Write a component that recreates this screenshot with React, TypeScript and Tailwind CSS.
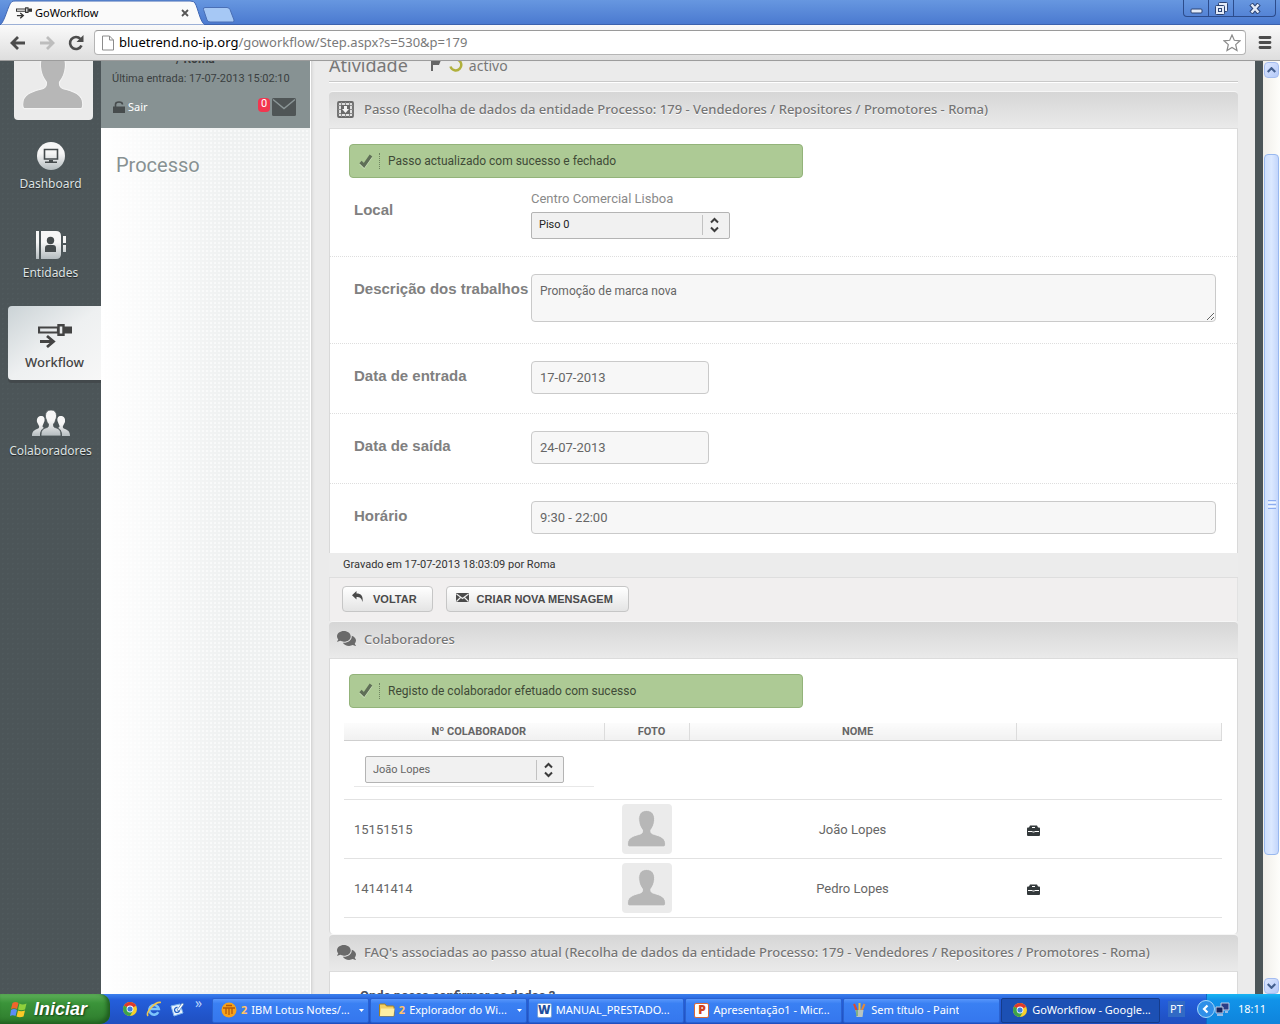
import type { ReactNode } from 'react'
import { FaComments } from 'react-icons/fa'

const STEP_TITLE = 'Recolha de dados da entidade Processo: 179 - Vendedores / Repositores / Promotores - Roma'

interface Colaborador {
  numero: string
  nome: string
}

const colaboradores: Colaborador[] = [
  { numero: '15151515', nome: 'João Lopes' },
  { numero: '14141414', nome: 'Pedro Lopes' },
]

/* ---------- icons ---------- */

function WorkflowIcon({ className }: { className?: string }) {
  return (
    <svg viewBox="0 0 34 24" className={className} fill="none" stroke="currentColor">
      <path d="M1 3.5h19v5H1z" strokeWidth="2.200" />
      <path d="M20.500 1.200h5v9.600h-5z" strokeWidth="2.400" />
      <path d="M26 2.500h8v7h-8z" fill="currentColor" stroke="none" />
      <path d="M2 17.500h13M9 12l6.500 5.500L9 23" strokeWidth="2.800" />
    </svg>
  )
}

function PersonIcon({ className }: { className?: string }) {
  return (
    <svg viewBox="0 0 50 50" className={className}>
      <path
        d="M24.500 6.500C30.500 6.500 33 11 32.500 16.500c-.3 4-1.700 7-3.700 9.500-.2 2 0 3.200 2 4C35 31.500 43.500 32.500 43.500 40q0 2.800-1.500 2.800H7Q5.500 42.800 5.500 40c0-7.500 8.500-8.500 13-10 2-.8 2.200-2 2-4-2-2.500-3.400-5.500-3.700-9.500C16.300 11 18.500 6.500 24.500 6.500z"
        fill="#b7b7b7"
        stroke="#f4f4f4"
        strokeWidth=".7"
      />
    </svg>
  )
}

function DashboardIcon() {
  return (
    <svg width="28" height="28" viewBox="0 0 28 28">
      <circle cx="14" cy="14" r="14" fill="url(#nav)" />
      <path d="M7.500 7.500h13v9.500h-13z" fill="none" stroke="#454b4d" strokeWidth="1.600" />
      <path d="M12 18h4v1.500h4V21H8v-1.500h4z" fill="#454b4d" />
    </svg>
  )
}

function EntidadesIcon() {
  return (
    <svg width="30" height="28" viewBox="0 0 30 28">
      <path d="M0 0h3v28H0zM5 0h15q5 0 5 5v18q0 5-5 5H5zM27 5h3v7h-3zM27 14h3v7h-3z" fill="url(#nav)" />
      <circle cx="14.500" cy="9.500" r="3.700" fill="#454b4d" />
      <path d="M9 21v-4q0-3 3-3h5q3 0 3 3v4z" fill="#454b4d" />
    </svg>
  )
}

function ColaboradoresIcon() {
  return (
    <svg width="38" height="26" viewBox="0 0 38 26" fill="url(#nav)">
      <path d="M9 6c3 0 4 2 3.500 5l-2 5c0 1 .5 1.500 1.500 2-3 1.500-4 3.500-4 8H0c0-4 1.500-5.500 5-7 2-.8 2.500-1.500 2-3L5 12c-.5-3.500 1-6 4-6zM29 6c-3 0-4 2-3.500 5l2 5c0 1-.5 1.500-1.500 2 3 1.500 4 3.500 4 8h8c0-4-1.500-5.500-5-7-2-.8-2.500-1.500-2-3l2-4c.5-3.500-1-6-4-6z" />
      <path
        d="M19 0c3.500 0 5.500 2 5.500 5.500 0 2-.2 3-1 4.500-.4 2-1 3-2 4 0 3 0 3 3 4 3 1.200 4.500 2.500 4.500 8H9c0-5.500 1.500-6.800 4.500-8 3-1 3-1 3-4-1-1-1.600-2-2-4-.8-1.500-1-2.500-1-4.500C13.500 2 15.500 0 19 0z"
        stroke="#4c5558"
        strokeWidth=".8"
      />
    </svg>
  )
}

function GridDownIcon() {
  return (
    <svg width="17" height="17" viewBox="0 0 17 17" className="shrink-0">
      <rect x="1" y="1" width="15" height="15" rx="1" fill="none" stroke="#6a6a6a" strokeWidth="1.800" />
      <path d="M1 4.500h15M1 8.500h3M13 8.500h3M1 12.500h15M4.500 1v15M12.500 1v15M8.500 1v3M8.500 13v3" stroke="#8a8a8a" />
      <path d="M4 4h9v9H4z" fill="#6a6a6a" />
      <path d="M7 5h3v3h2l-3.500 4L5 8h2z" fill="#f4f4f4" />
    </svg>
  )
}

function CheckIcon() {
  return (
    <svg width="14" height="15" viewBox="0 0 14 15" className="shrink-0">
      <path d="M1.500 9L5 12.500 12 2.500" fill="none" stroke="#d3e5c4" strokeWidth="3.200" />
      <path d="M1.500 8L5 11.500 12 1.500" fill="none" stroke="#5f6f57" strokeWidth="3.200" />
    </svg>
  )
}

function BriefcaseIcon() {
  return (
    <svg width="13" height="11" viewBox="0 0 13 11">
      <path d="M3 .5h7l1 2h1.500l.5 1V10q0 1-1 1H1q-1 0-1-1V3.500l.5-1H2z" fill="#33393b" />
      <path d="M5 2.500h3M1 6.500h4.500M7.500 6.500H12" stroke="#fff" />
      <path d="M5.500 7h2" stroke="#fff" />
    </svg>
  )
}

function ChromeIcon({ className }: { className?: string }) {
  return (
    <svg viewBox="0 0 16 16" className={className}>
      <circle cx="8" cy="8" r="7" fill="#f7cf2c" />
      <path d="M8 8L1.940 4.500A7 7 0 0 1 14.060 4.500z" fill="#dd3a2c" />
      <path d="M14.500 5H8l1 1z" fill="#dd3a2c" />
      <path d="M1.940 4.500A7 7 0 0 0 8 15l3-5.500L8 8z" fill="#3da44a" />
      <circle cx="8" cy="8" r="3.400" fill="#fff" />
      <circle cx="8" cy="8" r="2.600" fill="#3c7ee0" />
    </svg>
  )
}

/* ---------- browser chrome ---------- */

function TitleBar() {
  return (
    <header className="flex h-[25px] shrink-0 items-start justify-between border-b border-[#3c62ad] bg-linear-to-b from-[#6797e0] to-[#4b7ad0]">
      <div className="flex">
        <div className="relative flex h-[25px] w-[205px] items-center pt-px pr-4 pl-4">
          <svg className="absolute inset-0 h-full w-full" viewBox="0 0 205 25" preserveAspectRatio="none">
            <path d="M0 25C5 22 8 4 12 1.500Q13 1 15 1H190Q194 1 195 3C198 8 200 22 205 25z" fill="#fafafa" stroke="#3f66b3" />
          </svg>
          <WorkflowIcon className="relative h-3 w-4 text-[#333]" />
          <span className="relative ml-[3px] flex-1 text-[11px] text-black">GoWorkflow</span>
          <button aria-label="Fechar separador" className="relative">
            <svg width="8" height="8" viewBox="0 0 8 8" stroke="#555" strokeWidth="1.800">
              <path d="M1 1l6 6M7 1L1 7" />
            </svg>
          </button>
        </div>
        <button aria-label="Novo separador" className="-ml-0.5 pt-[5px]">
          <svg width="32" height="16" viewBox="0 0 32 16">
            <path d="M2 .5H24q2 0 3 2L31 13q.5 2-1.500 2H7q-2 0-3-2L.5 2.500q-.5-2 1.500-2z" fill="#a6c8f5" stroke="#4a6fb5" />
          </svg>
        </button>
      </div>
      <div className="mr-1 flex h-[17px] rounded-b border border-t-0 border-[#2c4c8c] text-[#dfe9fa]">
        <button aria-label="Minimizar" className="flex w-[25px] items-center justify-center border-r border-[#2c4c8c]">
          <svg width="13" height="13" viewBox="0 0 13 13">
            <rect x="1" y="7" width="11" height="4" rx="1" fill="#e3ebf8" stroke="#2c4474" />
          </svg>
        </button>
        <button aria-label="Restaurar" className="flex w-[25px] items-center justify-center border-r border-[#2c4c8c]">
          <svg width="13" height="13" viewBox="0 0 13 13" fill="#e3ebf8" stroke="#2c4474">
            <rect x="3.500" y=".5" width="9" height="9" rx="1" />
            <rect x=".5" y="3.500" width="9" height="9" rx="1" />
            <rect x="3.500" y="6.500" width="3" height="3" />
          </svg>
        </button>
        <button aria-label="Fechar" className="flex w-[41px] items-center justify-center">
          <svg width="12" height="11" viewBox="0 0 12 11">
            <path d="M2 1l8 9M10 1L2 10" stroke="#2c4474" strokeWidth="4.500" />
            <path d="M2.500 1.500l7 8M9.500 1.500l-7 8" stroke="#e3ebf8" strokeWidth="2.500" />
          </svg>
        </button>
      </div>
    </header>
  )
}

function Toolbar() {
  return (
    <div className="flex h-9 shrink-0 items-center border-b border-[#9c9c9c] bg-linear-to-b from-[#fafafa] to-[#dedede] pr-2 pl-2.5">
      <button aria-label="Anterior" className="w-[29px]">
        <svg width="16" height="14" viewBox="0 0 16 14" fill="none" stroke="#4c4c4c" strokeWidth="2.800">
          <path d="M15 7H2M8 1L2 7l6 6" />
        </svg>
      </button>
      <button aria-label="Seguinte" className="w-[29px]">
        <svg width="16" height="14" viewBox="0 0 16 14" fill="none" stroke="#bdbdbd" strokeWidth="2.800">
          <path d="M1 7h13M8 1l6 6-6 6" />
        </svg>
      </button>
      <button aria-label="Recarregar" className="w-[26px]">
        <svg width="16" height="16" viewBox="0 0 16 16">
          <path d="M12.500 4A6 6 0 1 0 13.500 10.500" fill="none" stroke="#4c4c4c" strokeWidth="2.600" />
          <path d="M15.500 0v7H8.500z" fill="#4c4c4c" />
        </svg>
      </button>
      <div className="flex h-[25px] flex-1 items-center rounded-sm border border-[#b5b5b5] border-t-[#9a9a9a] bg-white pr-1 pl-[7px]">
        <svg width="12" height="16" viewBox="0 0 12 16" className="mr-[5px] shrink-0">
          <path d="M.5 1h7l4 4v10H.5zM7.500 1v4h4" fill="#fff" stroke="#8c8c8c" />
        </svg>
        <div role="textbox" aria-label="Endereço" className="flex-1 text-[13px] text-[#7a7a7a]">
          <span className="text-black">bluetrend.no-ip.org</span>/goworkflow/Step.aspx?s=530&amp;p=179
        </div>
        <button aria-label="Adicionar aos favoritos">
          <svg width="18" height="18" viewBox="0 0 18 18">
            <path
              d="M9 1l2.300 5.300 5.700.5-4.300 3.800 1.300 5.900L9 13.500l-5 3 1.300-5.900L1 6.800l5.700-.5z"
              fill="#fff"
              stroke="#8a8a8a"
              strokeWidth="1.200"
            />
          </svg>
        </button>
      </div>
      <button aria-label="Menu" className="ml-3">
        <svg width="14" height="13" viewBox="0 0 14 13" stroke="#4d4d4d" strokeWidth="2.800" strokeLinecap="round">
          <path d="M2 1.500h10M2 6.500h10M2 11.500h10" />
        </svg>
      </button>
    </div>
  )
}

function ScrollButton({ down }: { down?: boolean }) {
  return (
    <button
      aria-label={down ? 'Descer' : 'Subir'}
      className="mx-px flex h-4 shrink-0 items-center justify-center rounded-sm border border-[#a5bdf0] bg-linear-to-br from-[#dde7fe] to-[#b4c9f8]"
    >
      <svg width="9" height="6" viewBox="0 0 9 6" fill="none" stroke="#44608f" strokeWidth="2.200">
        <path d={down ? 'M.7 1l3.800 3.800L8.300 1' : 'M.7 5l3.800-3.800L8.300 5'} />
      </svg>
    </button>
  )
}

function ScrollBar() {
  return (
    <div className="flex w-[17px] shrink-0 flex-col bg-linear-to-r from-[#f1efea] to-[#fefefb] pt-px">
      <ScrollButton />
      <div className="grow-[77]" />
      <div className="mx-px flex grow-[700] flex-col items-center justify-center gap-px rounded-sm border border-[#98b8ef] bg-linear-to-r from-[#cfe0fd] via-[#dbe8ff] to-[#c3d6fb]">
        <div className="h-px w-2 bg-[#8cacf0]" />
        <div className="h-px w-2 bg-[#eef4fe]" />
        <div className="h-px w-2 bg-[#8cacf0]" />
        <div className="h-px w-2 bg-[#eef4fe]" />
        <div className="h-px w-2 bg-[#8cacf0]" />
      </div>
      <div className="grow-[125]" />
      <ScrollButton down />
    </div>
  )
}

/* ---------- page ---------- */

function NavItem({ icon, label, active }: { icon: ReactNode; label: string; active?: boolean }) {
  return (
    <a
      href="#"
      className={
        active
          ? 'ml-2 flex h-[74px] flex-col items-center rounded-l bg-linear-to-br from-[#cbd3d6] via-[#eef0f1] via-50% to-[#f7f7f7] pt-3 text-[13px] font-medium text-[#444] shadow-[0_3px_0_#43494c]'
          : 'flex h-[74px] flex-col items-center pt-3 text-xs text-[#dde2e3] [text-shadow:0_1px_1px_#222]'
      }
    >
      <span className="flex h-8 items-center">{icon}</span>
      <span className="leading-6">{label}</span>
    </a>
  )
}

function Sidebar() {
  return (
    <nav className="w-[101px] shrink-0 bg-[#4c5558] bg-[radial-gradient(#4f595c_1px,transparent_1px)] bg-size-[5px_5px] font-['Noto_Sans',sans-serif]">
      {/* shared gradient for the light icons */}
      <svg width="0" height="0" className="absolute">
        <linearGradient id="nav" x1="0" y1="0" x2="0" y2="1">
          <stop offset="0.4" stopColor="#f6f6f6" />
          <stop offset="1" stopColor="#b4bcbf" />
        </linearGradient>
      </svg>
      <div className="-mt-5 ml-3.5 size-[79px] rounded bg-[#ebebeb]">
        <PersonIcon className="size-[79px]" />
      </div>
      <div className="mt-2 flex flex-col gap-[15px]">
        <NavItem icon={<DashboardIcon />} label="Dashboard" />
        <NavItem icon={<EntidadesIcon />} label="Entidades" />
        <NavItem icon={<WorkflowIcon className="mt-1 h-6 w-[34px]" />} label="Workflow" active />
        <NavItem icon={<ColaboradoresIcon />} label="Colaboradores" />
      </div>
    </nav>
  )
}

function SidePanel() {
  return (
    <aside className="w-[210px] shrink-0 border-r border-white bg-[#eff1f1] bg-[linear-gradient(to_right,#fff,transparent_60%),radial-gradient(#f8f9f9_1px,transparent_1px)] bg-size-[100%_100%,4px_4px]">
      <div className="flow-root h-[67px] bg-[#879293] px-[11px] text-[#3a3f40]">
        <p className="-mt-2.5 pl-16 text-xs leading-4 font-bold">/ Roma</p>
        <p className="mt-1 text-[11px] leading-4">Última entrada: 17-07-2013 15:02:10</p>
        <div className="mt-2.5 flex h-5 items-center justify-between pr-[3px] pl-px">
          <a href="#" className="flex items-center gap-[3px] font-['Noto_Sans',sans-serif] text-[11px] text-white">
            <svg width="12" height="12" viewBox="0 0 12 12">
              <path d="M2.500 6V3.500q0-2.500 3.500-2.500t3.500 2.500" fill="none" stroke="#474c4d" strokeWidth="1.600" />
              <path d="M0 5.500h12V12H0z" fill="#474c4d" />
            </svg>
            Sair
          </a>
          <div className="flex items-start gap-0.5">
            <span className="flex h-3.5 w-3 items-center justify-center rounded-sm bg-[#f2364f] text-[11px] text-white">0</span>
            <svg width="24" height="19" viewBox="0 0 24 19">
              <rect width="24" height="18" rx="1.500" fill="#4f5556" />
              <path d="M1 1.500L12 10.500 23 1.500" fill="none" stroke="#8b9697" strokeWidth="1.400" />
            </svg>
          </div>
        </div>
      </div>
      <h2 className="mt-[25px] ml-[15px] text-xl leading-6 text-[#879192] [text-shadow:0_1px_0_#fff]">
        Processo
      </h2>
    </aside>
  )
}

function PanelHeader({ icon, title }: { icon: ReactNode; title: string }) {
  return (
    <div className="flex h-[38px] items-center rounded-t border-t border-b border-t-[#f6f6f6] border-b-[#dcdcdc] bg-linear-to-b from-[#d6d6d6] to-[#eaeaea] pb-0.5 pl-2 text-[#757575]">
      <span className="flex w-[27px]">{icon}</span>
      <h3 className="font-['Noto_Sans',sans-serif] text-[13px] leading-5 font-medium [text-shadow:0_1px_0_#fff]">{title}</h3>
    </div>
  )
}

function Alert({ text }: { text: string }) {
  return (
    <div
      role="status"
      className="mx-[19px] flex h-[34px] w-[454px] items-center rounded-sm border border-[#93b37a] bg-[#adca95] pl-[9px] text-xs text-[#3f4a37]"
    >
      <CheckIcon />
      <span className="ml-1.5 flex h-4 items-center border-l border-dotted border-[#6f8560] pl-2">{text}</span>
    </div>
  )
}

function Picker({ id, value, label, tone }: { id: string; value: string; label?: string; tone: string }) {
  return (
    <div className="relative w-[199px]">
      <select
        id={id}
        aria-label={label}
        className={`h-[27px] w-full appearance-none rounded-xs border border-[#b4b4b4] bg-[#f1f1f1] px-[7px] text-[11px] ${tone}`}
      >
        <option>{value}</option>
      </select>
      <svg width="26" height="20" viewBox="0 0 26 20" className="pointer-events-none absolute top-1 right-0.5" fill="none">
        <path d="M.5 0v20" stroke="#c2c2c2" />
        <path d="M9 7.500l3.500-3.500L16 7.500M9 12.500l3.500 3.500 3.500-3.500" stroke="#3c3c3c" strokeWidth="2" />
      </svg>
    </div>
  )
}

const labelClass =
  "w-[177px] shrink-0 font-['Liberation_Sans',Arial,sans-serif] text-[15px] leading-5 font-bold whitespace-nowrap text-[#808080]"
const fieldClass = 'h-[33px] rounded-sm border border-[#cacaca] bg-[#f7f7f7] px-2 text-[13px] text-[#666]'

function FieldRow({ id, label, last, children }: { id: string; label: string; last?: boolean; children: ReactNode }) {
  return (
    <div className={`flex pt-[17px] pr-[21px] pb-[19px] pl-6 ${last ? '' : 'border-b border-dotted border-[#dedede]'}`}>
      <label htmlFor={id} className={`${labelClass} pt-[5px]`}>
        {label}
      </label>
      {children}
    </div>
  )
}

function StepPanel() {
  return (
    <section>
      <PanelHeader icon={<GridDownIcon />} title={`Passo (${STEP_TITLE})`} />
      <div className="border-x border-[#d9d9d9] bg-white pt-[15px]">
        <Alert text="Passo actualizado com sucesso e fechado" />
        <div className="flex border-b border-dotted border-[#dedede] pt-3 pb-[17px] pl-6">
          <label htmlFor="local" className={`${labelClass} pt-2.5`}>
            Local
          </label>
          <div>
            <p className="mb-[3px] text-[13px] leading-[18px] text-[#8a8a8a]">Centro Comercial Lisboa</p>
            <Picker id="local" value="Piso 0" tone="text-[#222]" />
          </div>
        </div>
        <FieldRow id="descricao" label="Descrição dos trabalhos">
          <textarea
            id="descricao"
            defaultValue="Promoção de marca nova"
            className="mb-0.5 block h-12 flex-1 rounded-sm border border-[#cacaca] bg-[#f7f7f7] px-2 py-1.5 text-xs leading-5 text-[#666]"
          />
        </FieldRow>
        <FieldRow id="entrada" label="Data de entrada">
          <input id="entrada" defaultValue="17-07-2013" className={`${fieldClass} w-[178px]`} />
        </FieldRow>
        <FieldRow id="saida" label="Data de saída">
          <input id="saida" defaultValue="24-07-2013" className={`${fieldClass} w-[178px]`} />
        </FieldRow>
        <FieldRow id="horario" label="Horário" last>
          <input id="horario" defaultValue="9:30 - 22:00" className={`${fieldClass} flex-1`} />
        </FieldRow>
      </div>
      <p className="h-[25px] border-b border-[#dedede] bg-[#ececec] pl-3.5 text-[11px] leading-6 text-[#333]">
        Gravado em 17-07-2013 18:03:09 por Roma
      </p>
      <div className="flex gap-[13px] border-x border-[#e2e2e2] bg-[#f1efef] px-3 pt-2 pb-[9px]">
        <ActionButton label="Voltar">
          <svg width="12" height="12" viewBox="0 0 12 12" className="-mt-1">
            <path d="M4.500 0v2.500C9 2.500 11.500 5 10.500 11 9.500 7 8 6 4.500 6v2.500L0 4.200z" fill="#4a4a4a" />
          </svg>
        </ActionButton>
        <ActionButton label="Criar nova mensagem">
          <svg width="13" height="9" viewBox="0 0 13 9" className="-mt-0.5">
            <rect width="13" height="9" rx="1" fill="#4a4a4a" />
            <path d="M.5 1l6 4.500L12.500 1M.5 8.500l4-4M12.500 8.500l-4-4" fill="none" stroke="#eee" strokeWidth="1.100" />
          </svg>
        </ActionButton>
      </div>
    </section>
  )
}

function ActionButton({ label, children }: { label: string; children: ReactNode }) {
  return (
    <button className="flex h-[26px] items-center rounded-sm border border-[#c6c6c6] bg-linear-to-b from-white to-[#e4e4e4] pr-[15px] pl-[9px] font-['Liberation_Sans',Arial,sans-serif] text-[11px] font-bold text-[#4a4a4a] uppercase">
      <span className="flex w-[21px]">{children}</span>
      {label}
    </button>
  )
}

function ColaboradoresPanel() {
  const th =
    'h-[18px] border-r border-b border-r-[#dcdcdc] border-b-[#cfcfcf] bg-linear-to-b from-[#fcfcfc] to-[#f1f1f1] p-0 pl-2.5 text-[11px] leading-4 font-bold text-[#666]'
  return (
    <section>
      <PanelHeader icon={<FaComments size={19} color="#6a6a6a" />} title="Colaboradores" />
      <div className="rounded-b border-x border-[#d9d9d9] bg-white pt-[15px] pb-4">
        <Alert text="Registo de colaborador efetuado com sucesso" />
        <div className="mt-[15px] mr-[15px] ml-3.5">
          <table className="w-full table-fixed border-collapse text-[13px] text-[#666]">
            <colgroup>
              <col className="w-[260px]" />
              <col className="w-[85px]" />
              <col className="w-[327px]" />
              <col />
            </colgroup>
            <thead>
              <tr>
                <th className={th}>Nº COLABORADOR</th>
                <th className={th}>FOTO</th>
                <th className={th}>NOME</th>
                <th className={th} aria-label="Ações" />
              </tr>
            </thead>
            <tbody>
              <tr className="border-b border-[#e2e2e2]">
                <td colSpan={4} className="h-[59px] p-0 pt-[3px] pl-2.5 align-middle">
                  <div className="w-60 border-b border-[#e8e8e8] pb-[3px] pl-[11px]">
                    <Picker id="colaborador" value="João Lopes" label="Colaborador" tone="text-[#666]" />
                  </div>
                </td>
              </tr>
              {colaboradores.map((c) => (
                <tr key={c.numero} className="border-b border-[#e2e2e2]">
                  <td className="h-[59px] p-0 pl-2.5">{c.numero}</td>
                  <td className="p-0">
                    <div className="mx-auto size-[50px] rounded-sm bg-[#ebebeb]">
                      <PersonIcon className="size-[50px]" />
                    </div>
                  </td>
                  <td className="p-0 text-center">{c.nome}</td>
                  <td className="p-0 pt-0.5 pl-[11px]">
                    <button aria-label={`Equipamento de ${c.nome}`} className="block">
                      <BriefcaseIcon />
                    </button>
                  </td>
                </tr>
              ))}
            </tbody>
          </table>
        </div>
      </div>
    </section>
  )
}

function FaqPanel() {
  return (
    <section>
      <PanelHeader
        icon={<FaComments size={19} color="#6a6a6a" />}
        title={`FAQ's associadas ao passo atual (${STEP_TITLE})`}
      />
      <div className="border-x border-[#d9d9d9] bg-white pt-3 pb-10 pl-[30px]">
        <a href="#" className="block text-[13px] leading-6 font-bold text-[#4a4f5c]">
          Onde posso confirmar os dados ?
        </a>
      </div>
    </section>
  )
}

function Main() {
  return (
    <main className="min-w-0 flex-1 border-r-8 border-[#4c5558] bg-[#ebebeb] pr-[17px] pl-[18px] shadow-[inset_3px_0_3px_-2px_#ccc]">
      <div className="-mt-2 flex items-center border-b border-[#c9c9c9] pb-1 text-[#777]">
        <h1 className="font-['Noto_Sans',sans-serif] text-lg leading-6">Atividade</h1>
        <svg width="12" height="16" viewBox="0 0 12 16" className="ml-[22px]">
          <path d="M1 3h10l-2 5H3v6H1z" fill="#666" />
        </svg>
        <svg width="14" height="14" viewBox="0 0 14 14" className="ml-[7px]" fill="none" strokeWidth="2.500">
          <path d="M8 1.500A5.500 5.500 0 1 1 1.500 8.500" stroke="#b0b03c" />
        </svg>
        <span className="ml-1.5 pt-0.5 font-['Noto_Sans',sans-serif] text-sm leading-5">activo</span>
      </div>
      <div className="mb-2 h-px bg-white" />
      <StepPanel />
      <ColaboradoresPanel />
      <FaqPanel />
    </main>
  )
}

/* ---------- taskbar ---------- */

function TaskButton({ icon, label, count, active }: { icon: ReactNode; label: string; count?: number; active?: boolean }) {
  return (
    <button
      className={`flex h-[25px] min-w-0 flex-1 items-center gap-1 rounded-xs border px-2 text-[11px] whitespace-nowrap text-white ${
        active
          ? 'border-[#153c8c] bg-[#1c50b4] pl-2.5'
          : 'border-[#2a62d0] bg-linear-to-b from-[#5796fb] via-[#3a80f3] via-20% to-[#3577ee]'
      }`}
    >
      {icon}
      {count && <b className="text-[#ffc266]">{count}</b>}
      <span className="truncate">{label}</span>
      {count && (
        <svg width="5" height="3" viewBox="0 0 5 3" fill="#fff" className="-mr-1 ml-auto shrink-0">
          <path d="M0 0h5L2.500 3z" />
        </svg>
      )}
    </button>
  )
}

function OfficeIcon({ letter, box, ink }: { letter: string; box: string; ink: string }) {
  return (
    <span className={`flex size-[15px] shrink-0 items-center justify-center rounded-xs border bg-white text-xs leading-none font-black ${box} ${ink}`}>
      {letter}
    </span>
  )
}

function Taskbar() {
  return (
    <footer className="flex h-[30px] shrink-0 items-stretch bg-linear-to-b from-[#3c81ee] via-[#245edb] via-20% to-[#1f4fc0] text-[11px] text-white">
      <button className="flex w-[110px] items-center gap-1.5 rounded-r-[10px] bg-linear-to-b from-[#5fb05a] via-[#3b943a] via-30% to-[#2d7a2c] pl-2.5 font-['Liberation_Sans',sans-serif] text-lg font-bold italic shadow-[inset_-3px_-2px_4px_#1f5c1f] [text-shadow:1px_1px_2px_#143d14]">
        <svg width="18" height="17" viewBox="0 0 18 17">
          <path d="M2.500 2q3-2 6 0L7 8q-3-1.500-6 0z" fill="#f0642c" />
          <path d="M9.500 2.500q3 2 7 0L15 8.500q-4 1.500-7 0z" fill="#8fd03c" />
          <path d="M1 9q3-1.800 6 0L5.500 15q-3-1.500-5.500 0z" fill="#5d8df5" />
          <path d="M8 9.500q3 1.500 7 0l-1.500 6q-4 1.500-7 0z" fill="#fbc928" />
        </svg>
        Iniciar
      </button>
      <div className="flex w-[102px] items-center gap-2 pl-3">
        <ChromeIcon className="size-4 shrink-0" />
        <svg width="16" height="16" viewBox="0 0 15 15" fill="none" className="shrink-0">
          <path d="M11.500 10.500A4.500 4.500 0 1 1 12 7.500H4" stroke="#7cc4fb" strokeWidth="2.400" />
          <path d="M2 14C-1 11 9 0 14 1.500" stroke="#f3c64a" strokeWidth="1.500" />
        </svg>
        <svg width="15" height="15" viewBox="0 0 15 15" className="shrink-0">
          <path d="M1 4l9-2 3 9-9 3z" fill="#e8f2fd" stroke="#7db3ec" />
          <path d="M9.500 7.500a2.500 2.500 0 1 1-2-2" fill="none" stroke="#1f5fc4" strokeWidth="1.300" />
          <path d="M7 8l5-7 2 1-5 7z" fill="#fff" stroke="#3a6fb8" strokeWidth=".7" />
        </svg>
        <span className="-mt-3 ml-0.5 text-sm text-[#b8d3fb]">»</span>
      </div>
      <div className="flex min-w-0 flex-1 items-center gap-px pt-0.5">
        <TaskButton
          count={2}
          label="IBM Lotus Notes/..."
          icon={
            <svg width="16" height="16" viewBox="0 0 16 16" className="shrink-0">
              <circle cx="8" cy="8" r="7.500" fill="#f7a21b" />
              <path d="M2 6h12M5 6v6M8 6v7M11 6v6M5 3.500h6" stroke="#b3590b" strokeWidth="1.300" />
            </svg>
          }
        />
        <TaskButton
          count={2}
          label="Explorador do Wi..."
          icon={
            <svg width="16" height="14" viewBox="0 0 16 14" className="shrink-0">
              <path d="M.5 2q0-1 1-1H6l1.500 2H14q1 0 1 1v9H.5z" fill="#f3cf63" stroke="#a07f26" />
              <path d="M2 5.500h13.500L14.500 13H1z" fill="#fdeea4" />
            </svg>
          }
        />
        <TaskButton label="MANUAL_PRESTADO..." icon={<OfficeIcon letter="W" box="border-[#7ba3d8]" ink="text-[#1f4f9e]" />} />
        <TaskButton label="Apresentação1 - Micr..." icon={<OfficeIcon letter="P" box="border-[#d9693c]" ink="text-[#d2421a]" />} />
        <TaskButton
          label="Sem título - Paint"
          icon={
            <svg width="15" height="16" viewBox="0 0 15 16" className="shrink-0">
              <path d="M5 9L2 2" stroke="#e04a2a" strokeWidth="2" />
              <path d="M7.500 9V1" stroke="#f0c03a" strokeWidth="2" />
              <path d="M9.500 9l3-7" stroke="#e28a3c" strokeWidth="2" />
              <path d="M3.500 8h8l-1 7h-6z" fill="#b9c4bf" />
              <path d="M5 8v6" stroke="#4b9a4a" />
            </svg>
          }
        />
        <TaskButton label="GoWorkflow - Google..." icon={<ChromeIcon className="size-4 shrink-0" />} active />
      </div>
      <div className="flex w-[46px] items-center pl-2">
        <span className="bg-[#316ac5] px-0.5 leading-4">PT</span>
      </div>
      <div className="flex w-[74px] items-center justify-between border-l border-[#0c6bc4] bg-linear-to-b from-[#19b5f3] via-[#1193e9] via-20% to-[#0f84dc] pr-3.5">
        <button aria-label="Mostrar ícones ocultos" className="-ml-2.5">
          <svg width="18" height="18" viewBox="0 0 18 18">
            <circle cx="9" cy="9" r="8.500" fill="#2f8fe8" stroke="#a8d8fa" />
            <path d="M10.500 5.500L7 9l3.500 3.500" fill="none" stroke="#fff" strokeWidth="2.200" />
          </svg>
        </button>
        <svg width="15" height="15" viewBox="0 0 15 15" className="-ml-2">
          <path d="M6 1h8v7H6z" fill="#2b3d86" stroke="#c3cde6" />
          <path d="M1 5h7v6H1z" fill="#16245c" stroke="#c3cde6" />
          <path d="M2 13h6M10 10h3" stroke="#c3cde6" strokeWidth="1.500" />
        </svg>
        <span>18:11</span>
      </div>
    </footer>
  )
}

export default function App() {
  return (
    <div className="flex h-screen flex-col overflow-hidden font-['Noto_Sans',sans-serif]">
      <TitleBar />
      <Toolbar />
      <div className="flex min-h-0 flex-1 overflow-hidden font-['Roboto',Arial,sans-serif]">
        <div className="flex min-w-0 flex-1 overflow-hidden">
          <Sidebar />
          <SidePanel />
          <Main />
        </div>
        <ScrollBar />
      </div>
      <Taskbar />
    </div>
  )
}
